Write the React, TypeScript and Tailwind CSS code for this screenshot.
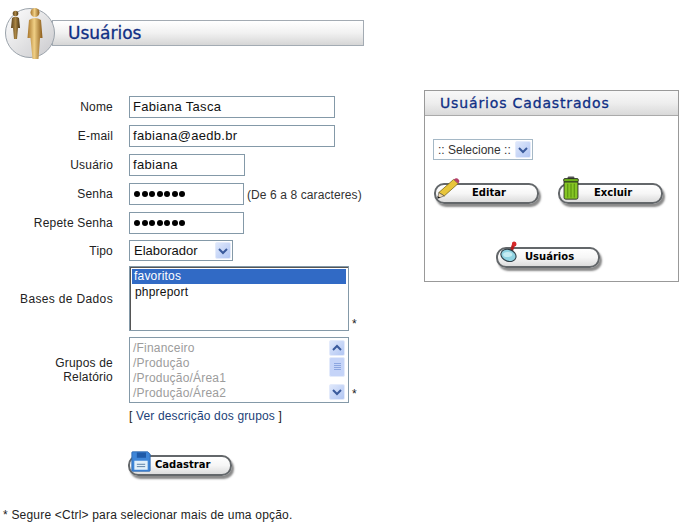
import React from 'react'

const labelClass = "text-right text-[12px] text-[#222] tracking-[0.2px] pr-[16px] leading-[14px]"
const inputClass = "border border-[#8499a8] bg-white h-[22px] flex items-center pl-[3px] text-[13px] text-[#111] tracking-[0.3px]"

function ArrowButton({ up = false, h = 20 }: { up?: boolean; h?: number }) {
  return (
    <div className="w-[16px] bg-gradient-to-br from-[#dfe8fb] to-[#b2c6f3] rounded-[2px] flex items-center justify-center border border-[#e4ebfb]" style={{ height: h }}>
      <svg width="10" height="8" viewBox="0 0 10 8">
        <path d={up ? "M1 6 L5 2 L9 6" : "M1 2 L5 6 L9 2"} fill="none" stroke="#3a5a9c" strokeWidth="2" />
      </svg>
    </div>
  )
}

function Dots() {
  return (
    <div className="flex gap-[1.5px] pl-[1px]">
      {[0, 1, 2, 3, 4, 5, 6].map((i) => (
        <span key={i} className="w-[6px] h-[6px] rounded-full bg-black" />
      ))}
    </div>
  )
}

function PillButton({ label, icon, width, textPad, iconLeft, iconTop }: { label: string; icon: React.ReactNode; width: number; textPad: number; iconLeft: number; iconTop: number }) {
  return (
    <div className="relative h-[21px]" style={{ width }}>
      <div className="absolute inset-0 rounded-[10px] border-2 border-[#63676a] bg-gradient-to-b from-white via-[#f6f6f6] to-[#dcdcdc] shadow-[2px_3px_2px_#8a8a8a]" />
      <div className="absolute" style={{ left: iconLeft, top: iconTop }}>{icon}</div>
      <span className="absolute top-[3px] text-[10px] leading-[14px] font-bold text-black font-['DejaVu_Sans',sans-serif]" style={{ left: textPad }}>{label}</span>
    </div>
  )
}

function FloppyIcon() {
  return (
    <svg width="20" height="21" viewBox="0 0 24 28" preserveAspectRatio="none" className="block">
      <path d="M1 2 Q1 1 2 1 H20 L23 4 V26 Q23 27 22 27 H2 Q1 27 1 26 Z" fill="#3f86d8" stroke="#2b64ad" />
      <rect x="7" y="2" width="11" height="7" fill="#1f5aa8" />
      <rect x="4" y="13" width="16" height="12" fill="#e3f0fa" />
      <rect x="7" y="17" width="10" height="1.5" fill="#6f8fb0" />
      <rect x="7" y="20" width="10" height="1.5" fill="#6f8fb0" />
    </svg>
  )
}

function PencilIcon() {
  return (
    <svg width="24" height="23" viewBox="0 0 26 28" preserveAspectRatio="none" className="block">
      <path d="M19 3 L24 8 L9 23 L3 19 Z" fill="#e8c53a" stroke="#6b5a10" strokeWidth="0.8" />
      <path d="M19 3 L21.5 1.5 Q23 1 24.5 3 Q26 5 25 6.5 L24 8 Z" fill="#b5406a" />
      <path d="M3 19 L9 23 L2 26 Z" fill="#f1d9b0" stroke="#333" strokeWidth="0.6" />
      <path d="M2 26 L1.5 23.5 L5 25 Z" fill="#111" />
    </svg>
  )
}

function TrashIcon() {
  return (
    <svg width="18" height="24" viewBox="0 0 22 28" preserveAspectRatio="none" className="block">
      <rect x="7" y="0.5" width="8" height="3" rx="1" fill="#555" />
      <rect x="2" y="3" width="18" height="4" rx="1.5" fill="#6db01c" stroke="#222" />
      <path d="M2.5 7 H19.5 V25 Q19.5 27 17.5 27 H4.5 Q2.5 27 2.5 25 Z" fill="#86c625" stroke="#222" />
      <path d="M7 9 V25 M11 9 V25 M15 9 V25" stroke="#5b9412" strokeWidth="1.4" />
    </svg>
  )
}

function LensIcon() {
  return (
    <svg width="20" height="22" viewBox="0 0 26 26" preserveAspectRatio="none" className="block">
      <path d="M15 11 L18 3" stroke="#b02020" strokeWidth="4" strokeLinecap="round" />
      <circle cx="18.5" cy="3.5" r="3" fill="#d8282a" />
      <ellipse cx="11" cy="17" rx="10" ry="7" fill="#8fd3e2" stroke="#2f3f48" strokeWidth="1.4" transform="rotate(15 11 17)" />
      <ellipse cx="10" cy="16" rx="6" ry="3" fill="#c4ecf3" />
    </svg>
  )
}

function PeopleIcon() {
  return (
    <svg width="50" height="52" viewBox="0 0 50 52" className="overflow-visible">
      <defs>
        <linearGradient id="gold" x1="0" y1="0" x2="1" y2="0">
          <stop offset="0" stopColor="#a8752a" />
          <stop offset="0.45" stopColor="#f0cf85" />
          <stop offset="1" stopColor="#8a5a18" />
        </linearGradient>
        <linearGradient id="dark" x1="0" y1="0" x2="1" y2="0">
          <stop offset="0" stopColor="#5e4520" />
          <stop offset="0.5" stopColor="#a98544" />
          <stop offset="1" stopColor="#463212" />
        </linearGradient>
        <linearGradient id="disc" x1="0" y1="0" x2="1" y2="1">
          <stop offset="0" stopColor="#ffffff" />
          <stop offset="1" stopColor="#c9c9cc" />
        </linearGradient>
      </defs>
      <circle cx="25" cy="25" r="24.5" fill="url(#disc)" stroke="#9ba3ab" />
      <circle cx="10.5" cy="5.5" r="2.8" fill="url(#dark)" />
      <path d="M7 10 Q10.5 7.5 14 10 L15 20 H13 L12 31 H9 L8 20 H6 Z" fill="url(#dark)" />
      <circle cx="30" cy="4.5" r="4.5" fill="url(#gold)" />
      <path d="M24 12 Q30 8 36 12 L37.5 30 H35 L33.5 51 H27.5 L25.5 30 H22.5 Z" fill="url(#gold)" />
    </svg>
  )
}

export default function App() {
  return (
    <div className="w-[688px] h-[526px] overflow-hidden bg-white font-['Liberation_Sans',Arial,sans-serif]">
      {/* Header */}
      <div className="flex items-center pt-[7px] pl-[5px] h-[58px]">
        <div className="z-10 w-[50px] h-[50px]">
          <PeopleIcon />
        </div>
        <div className="-ml-[3px] w-[312px] h-[26px] border border-[#a3abb3] bg-gradient-to-b from-white via-[#f1f1f1] to-[#d6d6d6] pl-[15px] flex items-center">
          <span className="text-[17px] leading-[20px] text-[#0f2f85] font-['DejaVu_Sans',sans-serif] [-webkit-text-stroke:0.3px_#0f2f85]">Usuários</span>
        </div>
      </div>

      <div className="flex">
        {/* Form */}
        <div className="w-[424px] shrink-0 pt-[38px]">
          <div className="grid grid-cols-[129px_1fr] items-center">
            <div className={`${labelClass} pb-[8px]`}>Nome</div>
            <div className="h-[29px]"><div className={`${inputClass} w-[206px]`}>Fabiana Tasca</div></div>
            <div className={`${labelClass} pb-[7px]`}>E-mail</div>
            <div className="h-[29px]"><div className={`${inputClass} w-[206px]`}>fabiana@aedb.br</div></div>
            <div className={`${labelClass} pb-[7px]`}>Usuário</div>
            <div className="h-[29px]"><div className={`${inputClass} w-[116px]`}>fabiana</div></div>
            <div className={`${labelClass} pb-[8px]`}>Senha</div>
            <div className="h-[29px] flex items-start">
              <div className={`${inputClass} w-[115px]`}><Dots /></div>
              <span className="ml-[3px] mt-[5px] text-[12px] leading-[14px] text-[#333] tracking-[0.1px]">(De 6 a 8 caracteres)</span>
            </div>
            <div className={`${labelClass} pb-[7px]`}>Repete Senha</div>
            <div className="h-[28px]"><div className={`${inputClass} w-[115px]`}><Dots /></div></div>
            <div className={`${labelClass} pb-[4px]`}>Tipo</div>
            <div className="h-[26px]">
              <div className="w-[104px] h-[21px] border border-[#8499a8] flex items-center justify-between pl-[4px] pr-[1px] text-[13px] text-[#111]">
                Elaborador
                <ArrowButton h={17} />
              </div>
            </div>

            <div className={`${labelClass} pb-[6px] tracking-[0.35px]`}>Bases de Dados</div>
            <div className="h-[71px] flex items-end">
              <div className="w-[220px] h-[65px] mb-[6px] border border-[#8499a8] p-[2px] text-[12px] leading-[15px] tracking-[0.2px] shadow-[inset_1px_1px_0_#555]">
                <div className="bg-[#316ac5] text-white pl-[2px]">favoritos</div>
                <div className="text-[#111] pl-[3px] pt-[1px]">phpreport</div>
              </div>
              <span className="ml-[3px] mb-[6px] text-[12px] leading-[14px] text-[#222]">*</span>
            </div>

            <div className={labelClass}>Grupos de<br />Relatório</div>
            <div className="h-[66px] flex items-end">
              <div className="w-[220px] h-[66px] border border-[#8499a8] p-[2px] flex justify-between text-[12px] leading-[15px] tracking-[0.2px] text-[#9c9c9c]">
                <div className="pl-[1px] pt-[1px]">
                  <div>/Financeiro</div>
                  <div>/Produção</div>
                  <div>/Produção/Área1</div>
                  <div>/Produção/Área2</div>
                </div>
                <div className="w-[16px] mr-[1px] flex flex-col justify-between">
                  <ArrowButton up h={16} />
                  <div className="h-[20px] -mt-[7px] bg-[#c5d4f8] border border-[#e4ebfb] rounded-[2px] flex flex-col items-center justify-center gap-[1px]">
                    <span className="w-[7px] h-px bg-[#8ca6e0]" />
                    <span className="w-[7px] h-px bg-[#8ca6e0]" />
                    <span className="w-[7px] h-px bg-[#8ca6e0]" />
                    <span className="w-[7px] h-px bg-[#8ca6e0]" />
                  </div>
                  <ArrowButton h={16} />
                </div>
              </div>
              <span className="ml-[3px] mb-[2px] text-[12px] leading-[14px] text-[#222]">*</span>
            </div>

            <div />
            <div className="pt-[6px] text-[12px] leading-[14px] tracking-[0.15px] text-[#222]">
              [ <span className="text-[#1c3f78]">Ver descrição dos grupos</span> ]
            </div>
          </div>

          <div className="ml-[128px] mt-[32px]">
            <PillButton label="Cadastrar" icon={<FloppyIcon />} width={104} textPad={27} iconLeft={3} iconTop={-4} />
          </div>
          <div className="mt-[32px] pl-[3px] text-[12px] leading-[14px] tracking-[0.2px] text-[#222]">
            * Segure &lt;Ctrl&gt; para selecionar mais de uma opção.
          </div>
        </div>

        {/* Painel de usuários */}
        <div className="w-[255px] h-[192px] mt-[32px] border border-[#999] shrink-0">
          <div className="h-[25px] border-b border-[#aaa] bg-gradient-to-b from-[#f8f8f8] via-[#eee] to-[#d9d9d9] pl-[15px] flex items-center">
            <span className="text-[14px] leading-[16px] text-[#0f2f85] font-['DejaVu_Sans',sans-serif] tracking-[0.85px] [-webkit-text-stroke:0.3px_#0f2f85] whitespace-nowrap">Usuários Cadastrados</span>
          </div>
          <div className="pl-[8px] pt-[23px]">
            <div className="w-[100px] h-[21px] border border-[#a5b8c6] flex items-center justify-between pl-[4px] pr-[1px] text-[12px] text-[#333] whitespace-nowrap">
              :: Selecione ::
              <ArrowButton h={17} />
            </div>
            <div className="flex gap-[19px] mt-[23px] pl-[1px]">
              <PillButton label="Editar" icon={<PencilIcon />} width={105} textPad={38} iconLeft={2} iconTop={-6} />
              <PillButton label="Excluir" icon={<TrashIcon />} width={105} textPad={36} iconLeft={4} iconTop={-7} />
            </div>
            <div className="ml-[63px] mt-[43px]">
              <PillButton label="Usuários" icon={<LensIcon />} width={104} textPad={29} iconLeft={4} iconTop={-6} />
            </div>
          </div>
        </div>
      </div>
    </div>
  )
}
